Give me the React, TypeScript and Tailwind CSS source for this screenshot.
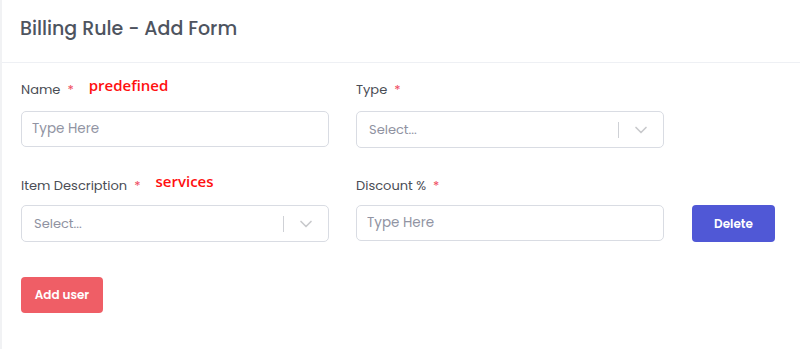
import React from "react";
import { ChevronDown } from "lucide-react";

const font = { fontFamily: "Poppins, 'Open Sans', 'Liberation Sans', sans-serif" };
const noteFont = { fontFamily: "'Open Sans', 'Liberation Sans', sans-serif" };

function Label({ text, note, gap = 11 }: { text: string; note?: string; gap?: number }) {
  return (
    <div className={`flex items-center h-5 ${gap === 11 ? "mb-[11px]" : "mb-[9px]"}`}>
      <span className="text-[13px] text-[#4a4d55]">{text}</span>
      <span className="text-[#ef4b5e] text-[13px] ml-[7px]">*</span>
      {note && (
        <span
          className="text-[15px] font-semibold text-[#ff1010] ml-[15px] -mt-[9px]"
          style={noteFont}
        >
          {note}
        </span>
      )}
    </div>
  );
}

function TextInput() {
  return (
    <input
      type="text"
      placeholder="Type Here"
      className="w-full h-[36px] px-[10px] border border-[#d9dce3] rounded-[5px] text-[13.5px] placeholder:text-[#9194a3] outline-none"
    />
  );
}

function SelectBox() {
  return (
    <div className="w-full h-[37px] border border-[#d9dce3] rounded-[5px] flex items-center pl-[12px] pr-[12px]">
      <span className="flex-1 text-[13px] text-[#8f92a1]">Select...</span>
      <span className="w-px h-[16px] bg-[#cfd1d6] mr-[12px]" />
      <ChevronDown size={20} strokeWidth={2} className="text-[#c8c9cc]" />
    </div>
  );
}

export default function App() {
  return (
    <div className="bg-white min-h-[349px] border-l-2 border-[#f1f2f4]" style={font}>
      <div className="h-[63px] px-[18px] flex items-center border-b border-[#eef0f4]">
        <h2 className="text-[19px] text-[#4e545f] font-medium -mt-[4px]">
          Billing Rule - Add Form
        </h2>
      </div>
      <div className="pl-[19px] pt-[17px]">
        <div className="grid grid-cols-[308px_308px_84px] gap-x-[27px]">
          <div>
            <Label text="Name" note="predefined" />
            <TextInput />
          </div>
          <div>
            <Label text="Type" />
            <SelectBox />
          </div>
          <div />
          <div className="mt-[28px]">
            <Label text="Item Description" note="services" gap={9} />
            <SelectBox />
          </div>
          <div className="mt-[28px]">
            <Label text="Discount %" gap={9} />
            <TextInput />
          </div>
          <div className="mt-[28px] flex items-end">
            <button className="w-[84px] h-[37px] ml-px rounded-[4px] bg-[#5058d6] text-white text-[12px] font-semibold">
              Delete
            </button>
          </div>
        </div>
        <button className="mt-[35px] w-[82px] h-[36px] rounded-[4px] bg-[#ef5e66] text-white text-[12px] font-semibold">
          Add user
        </button>
      </div>
    </div>
  );
}
